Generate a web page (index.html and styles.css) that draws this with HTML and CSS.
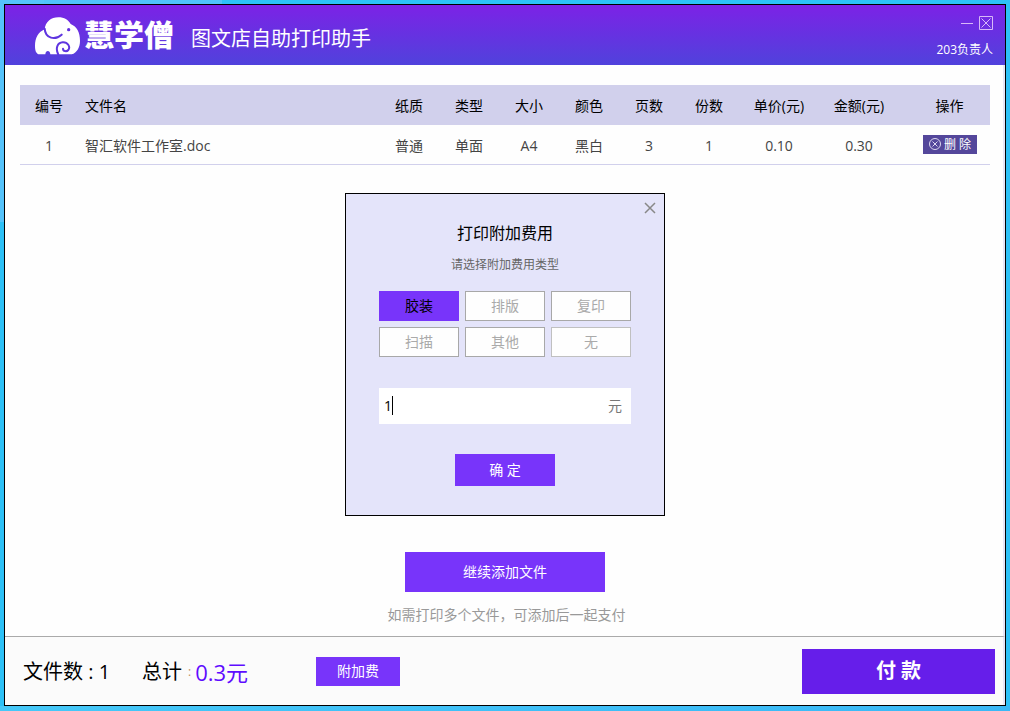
FILE: index.html
```html
<!DOCTYPE html>
<html lang="zh-CN">
<head>
<meta charset="utf-8">
<title>图文店自助打印助手</title>
<link rel="stylesheet" href="styles.css">
</head>
<body>
<div class="window">
  <header class="header">
    <svg class="logo" viewBox="0 0 135 112" aria-hidden="true">
      <path fill="#fff" d="M10 111C3 107 0 100 0 86 0 62 10 44 29 36 31 14 48 0 70 0 88 0 100 8 107 20 126 28 135 46 135 70 135 90 126 106 110 111L46 111C45 98 32 98 31 111Z"/>
      <path fill="none" stroke="#5f35e0" stroke-width="6" stroke-linecap="round" d="M29 34C31 64 60 70 80 52M70 112C60 92 68 76 83 75 98 74 107 88 100 98 95 104 84 102 84 94"/>
      <circle cx="101" cy="37" r="5" fill="#632fe0"/>
    </svg>
    <span class="brand">慧学僧</span>
    <h1 class="title">图文店自助打印助手</h1>
    <div class="account">
      <div class="controls">
        <button class="control" aria-label="最小化"><svg viewBox="0 0 14 14"><path d="M1 7.500H13"/></svg></button>
        <button class="control" aria-label="关闭"><svg viewBox="0 0 14 14"><path d="M.5.5H13.500V13.500H.5ZM2.500 2.500L11.500 11.500M11.500 2.500L2.500 11.500"/></svg></button>
      </div>
      <span class="user">203负责人</span>
    </div>
  </header>

  <main class="main">
    <table class="files">
      <thead>
        <tr>
          <th class="col-id">编号</th><th class="col-name">文件名</th>
          <th class="col-attr">纸质</th><th class="col-attr">类型</th><th class="col-attr">大小</th>
          <th class="col-attr">颜色</th><th class="col-attr">页数</th><th class="col-attr">份数</th>
          <th class="col-price">单价(元)</th><th class="col-price">金额(元)</th><th class="col-action">操作</th>
        </tr>
      </thead>
      <tbody>
        <tr>
          <td>1</td><td class="col-name">智汇软件工作室.doc</td>
          <td>普通</td><td>单面</td><td>A4</td><td>黑白</td><td>3</td><td>1</td><td>0.10</td><td>0.30</td>
          <td class="col-action"><button class="delete"><svg viewBox="0 0 14 14" aria-hidden="true"><circle cx="7" cy="7" r="5.500"/><path d="M4.500 4.500L9.500 9.500M9.500 4.500L4.500 9.500"/></svg>删 除</button></td>
        </tr>
      </tbody>
    </table>
    <div class="more">
      <button class="add">继续添加文件</button>
      <p class="hint">如需打印多个文件，可添加后一起支付</p>
    </div>
  </main>

  <footer class="footer">
    <span class="count">文件数 : 1</span>
    <span class="total">总计<span class="colon">:</span><strong class="amount">0.3元</strong></span>
    <button class="fee">附加费</button>
    <button class="pay">付 款</button>
  </footer>

  <div class="overlay">
    <form class="dialog" role="dialog" aria-labelledby="dialog-title">
      <button type="button" class="close" aria-label="关闭"><svg viewBox="0 0 12 12"><path stroke-width="1.500" d="M1 1L11 11M11 1L1 11"/></svg></button>
      <h2 class="dialog-title" id="dialog-title">打印附加费用</h2>
      <p class="dialog-hint">请选择附加费用类型</p>
      <div class="options">
        <button type="button" class="option selected">胶装</button>
        <button type="button" class="option">排版</button>
        <button type="button" class="option">复印</button>
        <button type="button" class="option">扫描</button>
        <button type="button" class="option">其他</button>
        <button type="button" class="option faint">无</button>
      </div>
      <div class="field">
        <input class="price" id="price" type="text" value="1" aria-label="附加费用">
        <span class="caret"></span>
        <label class="unit" for="price">元</label>
      </div>
      <button type="button" class="confirm">确 定</button>
    </form>
  </div>
</div>
</body>
</html>
```

FILE: styles.css
```css
* { box-sizing: border-box; }
html { height: 100%; }
body {
  margin: 0;
  min-height: 100%;
  display: flex;
  padding: 4px 4px 5px;
  background:
    linear-gradient(#55c3fb, #55c3fb) 0 0 / 44px 4px no-repeat,
    linear-gradient(#50c2fa, #50c2fa) 0 0 / 22% 4px no-repeat,
    linear-gradient(#55c3fb, #55c3fb) 0 0 / 4px 222px no-repeat,
    linear-gradient(90deg, #45c8f8, #3ab8f6) 0 100% / 100% 5px no-repeat,
    #2dc1f7;
  font-family: "Open Sans", "Noto Sans CJK SC", sans-serif;
  font-size: 14px;
  line-height: 20px;
}
button, input { font: inherit; margin: 0; padding: 0; border: 0; border-radius: 0; }
h1, h2, p { margin: 0; font-weight: 400; }
svg { display: block; fill: none; stroke: currentColor; }

.window {
  position: relative;
  flex: 1;
  display: flex;
  flex-direction: column;
  border: 1px solid #000;
  background: #fefefe;
}

.header {
  display: flex;
  align-items: center;
  height: 60px;
  padding: 0 12px 0 30px;
  background: linear-gradient(#7c22e6, #5042dc);
  color: #fff;
}
.logo { width: 45px; height: 38px; margin-top: 2px; stroke: none; }
.brand { margin-left: 4px; font-size: 30px; line-height: 40px; font-weight: 900; }
.title { margin-left: 17px; font-size: 20px; line-height: 28px; padding-top: 8px; }
.account {
  margin-left: auto;
  display: flex;
  flex-direction: column;
  align-items: flex-end;
  gap: 10px;
  padding-top: 6px;
}
.controls { display: flex; gap: 5px; }
.control { width: 14px; height: 14px; background: none; color: #d8b8f8; }
.control svg { width: 14px; height: 14px; }
.user { font-size: 12px; line-height: 20px; }

.main {
  flex: 1;
  display: flex;
  flex-direction: column;
  padding: 20px 13px 11px 15px;
  border-right: 2px solid #e6e6f8;
}
.files { width: 100%; table-layout: fixed; border-collapse: separate; border-spacing: 0; text-align: center; }
.files th, .files td { padding: 0; height: 40px; font-weight: 400; }
.files th { background: #d1d0ec; color: #000; padding-top: 2px; }
.files td { color: #444; border-bottom: 1px solid #d1d0ec; padding-top: 2px; }
.col-id { width: 58px; }
.files .col-name { text-align: left; padding-left: 7px; }
.col-attr { width: 60px; }
.col-price { width: 80px; }
.col-action { width: 91px; }
.files .col-action { padding-left: 10px; }
.delete {
  display: inline-flex;
  align-items: center;
  justify-content: center;
  gap: 2px;
  width: 54px;
  height: 19px;
  background: #54479b;
  color: #fff;
  font-size: 12px;
  line-height: 19px;
  vertical-align: middle;
  margin-bottom: 3px;
}
.delete svg { width: 14px; height: 14px; color: #ddd8f0; }

.more { margin-top: auto; display: flex; flex-direction: column; align-items: center; gap: 13px; }
.add { width: 200px; height: 40px; background: #7834fa; color: #fff; }
.hint { padding-left: 3px; color: #999; }

.footer {
  display: flex;
  align-items: center;
  height: 69px;
  padding: 0 8px 0 18px;
  border-top: 1px solid #aaa;
  border-right: 2px solid #e6e6f8;
  background: #fbfbfb;
  color: #000;
}
.count, .total { font-size: 20px; line-height: 28px; padding-top: 2px; white-space: nowrap; }
.count { width: 119px; }
.total { width: 174px; display: flex; align-items: center; }
.colon { color: #c09060; font-size: 12px; margin: 0 4px 0 6px; }
.amount { font-size: 22px; font-weight: 400; color: #5f0cff; }
.fee { width: 84px; height: 29px; background: #7834fa; color: #fff; }
.pay { margin-left: auto; width: 193px; height: 45px; background: #661eea; color: #fff; font-size: 20px; font-weight: 700; }

.overlay {
  position: absolute;
  inset: 0;
  display: flex;
  align-items: center;
  justify-content: center;
  padding-bottom: 2px;
}
.dialog {
  position: relative;
  width: 320px;
  display: flex;
  flex-direction: column;
  align-items: center;
  padding: 27px 33px 29px;
  border: 1px solid #000;
  background: #e4e4fa;
}
.close { position: absolute; top: 8px; right: 8px; width: 12px; height: 12px; background: none; color: #888; }
.close svg { width: 12px; height: 12px; }
.dialog-title { font-size: 16px; line-height: 24px; color: #000; }
.dialog-hint { margin-top: 10px; font-size: 12px; line-height: 20px; color: #666; }
.options { margin-top: 16px; width: 100%; display: grid; grid-template-columns: repeat(3, 1fr); gap: 6px; }
.option { height: 30px; border: 1px solid #a8a8a8; background: #fefefe; color: #aaa; }
.option.selected { border-color: #7834fa; background: #7834fa; color: #000; }
.option.faint { border-color: #c0c0c0; }
.field { position: relative; margin-top: 31px; width: 100%; height: 36px; display: flex; align-items: center; padding: 0 9px 0 5px; background: #fff; }
.price { flex: 1; min-width: 0; height: 36px; background: none; color: #000; outline: none; }
.caret { position: absolute; left: 13px; top: 8px; width: 1px; height: 19px; background: #000; }
.unit { color: #777; }
.confirm { margin-top: 30px; width: 100px; height: 32px; background: #7834fa; color: #fff; }
```
